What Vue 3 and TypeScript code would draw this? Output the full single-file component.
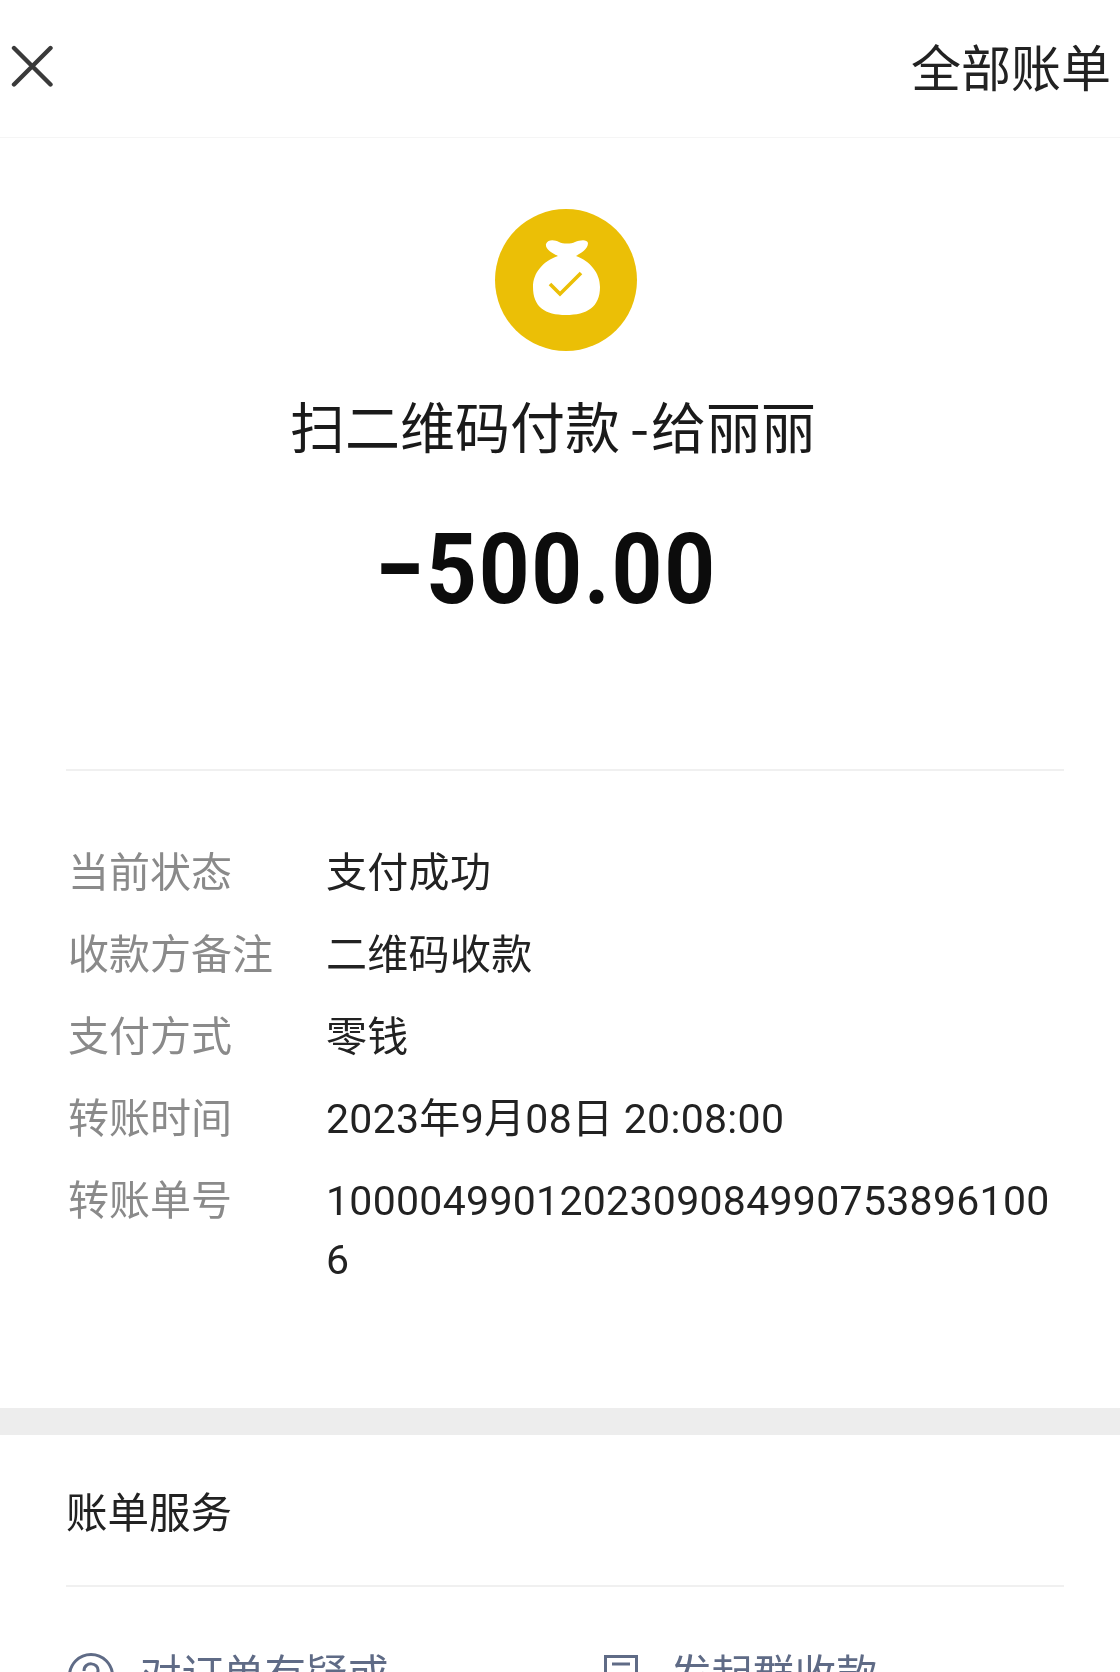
<script setup lang="ts">
interface Row { label: string; value: string }
const rows: Row[] = [
  { label: '当前状态', value: '支付成功' },
  { label: '收款方备注', value: '二维码收款' },
  { label: '支付方式', value: '零钱' },
  { label: '转账时间', value: '2023年9月08日 20:08:00' },
  { label: '转账单号', value: '10000499012023090849907538961006' },
]
</script>

<template>
  <div class="page">
    <header class="top">
      <svg class="close" viewBox="0 0 42 42" width="42" height="42" aria-label="关闭">
        <path d="M3 3 L39.5 39.5 M39.5 3 L3 39.5" stroke="#3a3a3a" stroke-width="4.4" fill="none" stroke-linecap="round" />
      </svg>
      <span class="all">全部账单</span>
    </header>

    <section class="hero">
      <svg class="bag" viewBox="0 0 142 142" width="142" height="142">
        <circle cx="71" cy="71" r="71" fill="#ebbf06" />
        <path d="M51 35 C53 30 60 31 64 33 C68 35 76 35 80 33 C85 31 92 30 93 34 C93 40 86 44 81 47 C95 52 105 64 105 78 C105 98 92 106 71 106 C50 106 38 98 38 78 C38 64 48 52 63 47 C57 44 50 40 51 35 Z" fill="#fff" />
        <path d="M55 75 L65 85 L86 64" fill="none" stroke="#ebbf06" stroke-width="3.6" />
      </svg>
      <h1 class="title">扫二维码付款<span class="dash">-</span>给丽丽</h1>
      <div class="amount">−500.00</div>
    </section>

    <div class="rule"></div>

    <dl class="details">
      <div v-for="r in rows" :key="r.label" class="row">
        <dt>{{ r.label }}</dt>
        <dd>{{ r.value }}</dd>
      </div>
    </dl>

    <div class="band"></div>

    <section class="service">
      <h2>账单服务</h2>
      <div class="rule"></div>
      <div class="links">
        <div class="link">
          <svg viewBox="0 0 46 46" width="46" height="46">
            <circle cx="23" cy="23" r="21.5" fill="none" stroke="#5f6b86" stroke-width="3" />
            <path d="M16 18 C16 8 31 9 30 18 C30 23 23 23 23 29" fill="none" stroke="#5f6b86" stroke-width="3" />
          </svg>
          <span>对订单有疑或</span>
        </div>
        <div class="link second">
          <svg viewBox="0 0 34 46" width="34" height="46">
            <rect x="1.5" y="1.5" width="31" height="43" fill="none" stroke="#5f6b86" stroke-width="3" />
            <path d="M8 9 H26" stroke="#5f6b86" stroke-width="3" />
          </svg>
          <span>发起群收款</span>
        </div>
      </div>
    </section>
  </div>
</template>

<style>
html, body { margin: 0; background: #fff; }
</style>

<style scoped>
.page {
  width: 1120px;
  height: 1672px;
  overflow: hidden;
  background: #fff;
  font-family: "Noto Sans CJK SC", "Noto Sans", sans-serif;
  color: #1c1c1c;
  filter: blur(0.4px);
}
.top {
  height: 138px;
  box-sizing: border-box;
  border-bottom: 1px solid #f5f5f5;
  display: flex;
  align-items: center;
  justify-content: space-between;
  padding: 0 9px 6px 11px;
}
.all { font-size: 50px; line-height: 60px; color: #222; margin-bottom: 2px; }
.hero {
  display: flex;
  flex-direction: column;
  align-items: center;
  padding: 71px 0 0 0;
  height: 631px;
  box-sizing: border-box;
}
.bag { display: block; margin-left: 12px; }
.title {
  margin: 35px 14px 0 0;
  font-size: 55px;
  line-height: 76px;
  font-weight: 400;
  color: #1a1a1a;
}
.dash { margin: 0 2px 0 10px; }
.amount {
  margin: 48px 29px 0 0;
  font-family: Roboto, sans-serif;
  font-weight: 700;
  font-size: 98px;
  line-height: 120px;
  color: #0c0c0c;
  letter-spacing: 2px;
  transform: scaleX(0.905);
}
.rule { height: 2px; margin: 0 56px 0 66px; background: #f0f0f0; }
.details { margin: 69px 0 0; padding: 0 66px 0 68px; height: 568px; box-sizing: border-box; }
.row { display: flex; align-items: baseline; font-size: 41px; line-height: 59px; margin-bottom: 23px; }
.row:not(:last-child) { height: 59px; }
.row dt { width: 258px; flex: none; color: #8a8a8a; }
.row dd { margin: 0; flex: 1; min-width: 0; color: #222; word-break: break-all; letter-spacing: 0.3px; font-family: Roboto, "Noto Sans CJK SC", sans-serif; }
.band { height: 27px; background: #ededed; }
.service h2 { margin: 0; padding: 46px 0 0 66px; height: 150px; box-sizing: border-box; font-size: 41.5px; line-height: 59px; font-weight: 400; color: #222; }
.links { display: flex; padding: 56px 0 0 68px; }
.link { display: flex; align-items: flex-start; color: #5f6b86; font-size: 41.5px; line-height: 59px; }
.link svg { flex: none; margin-top: 10px; margin-right: 26px; }
.link.second svg { margin-top: 12px; margin-right: 32px; }
.link:first-child { width: 536px; }
</style>
